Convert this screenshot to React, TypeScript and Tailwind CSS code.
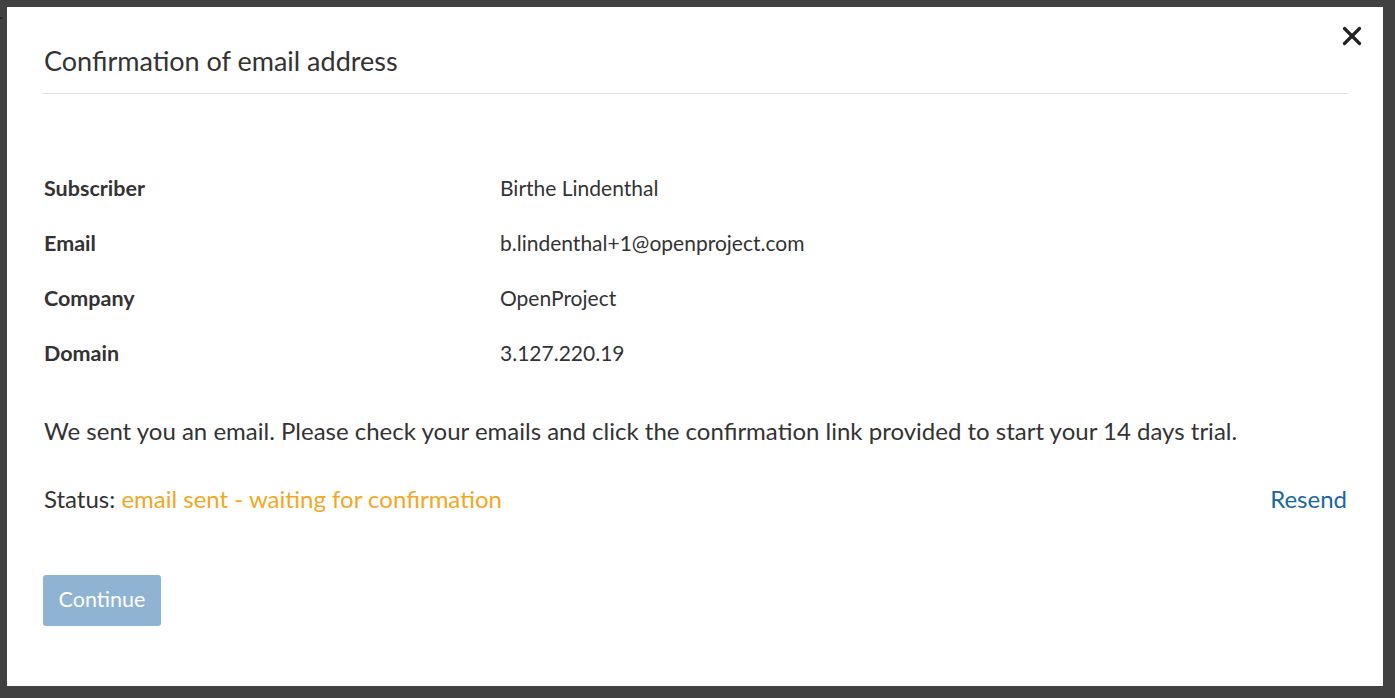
import { X } from "lucide-react";

const rows = [
  { label: "Subscriber", value: "Birthe Lindenthal" },
  { label: "Email", value: "b.lindenthal+1@openproject.com" },
  { label: "Company", value: "OpenProject" },
  { label: "Domain", value: "3.127.220.19" },
];

export default function App() {
  return (
    <div
      className="relative h-[698px] w-[1395px] overflow-hidden bg-[#414141] pl-[7px] pt-[7px]"
      style={{ fontFamily: "Lato, 'Open Sans', sans-serif" }}
    >
      <span className="absolute left-[-4px] top-[6px] text-[18px] italic text-[#1c1c1c]">r</span>

      <div className="relative flex h-[679px] w-[1376px] flex-col bg-white px-[36px] text-[#333333]">
        <button className="absolute right-[16px] top-[14px] text-[#222]">
          <X size={30} strokeWidth={2.6} />
        </button>

        <div className="flex h-[87px] items-end border-b border-[#dddddd] pb-[19px]">
          <h1 className="pl-[1px] text-[27px] leading-none">Confirmation of email address</h1>
        </div>

        <div className="mt-[82px] grid grid-cols-[457px_1fr] gap-y-[31px] text-[21px] leading-[24px]">
          {rows.map((r) => (
            <div key={r.label} className="contents">
              <div className="pl-[1px] text-[21.5px] font-bold">{r.label}</div>
              <div>{r.value}</div>
            </div>
          ))}
        </div>

        <p className="mt-[52px] pl-[1px] text-[24px] leading-[28px]">
          We sent you an email. Please check your emails and click the confirmation link provided to start your 14 days trial.
        </p>

        <div className="mt-[40px] flex items-center justify-between pl-[1px] text-[24px] leading-[28px]">
          <div>
            Status: <span className="text-[#f5a623]">email sent - waiting for confirmation</span>
          </div>
          <a href="#" className="text-[#1a67a3]">Resend</a>
        </div>

        <div className="mt-[62px]">
          <button className="h-[51px] w-[118px] rounded-[3px] bg-[#8fb3d3] pb-[3px] text-[21.5px] text-white">
            Continue
          </button>
        </div>
      </div>
    </div>
  );
}
